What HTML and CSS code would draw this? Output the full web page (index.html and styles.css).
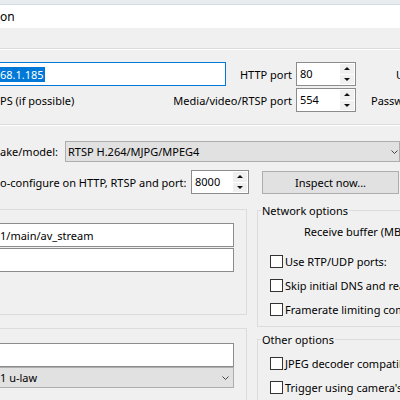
FILE: index.html
```html
<!DOCTYPE html>
<html lang="en">
<head>
  <meta charset="UTF-8" />
  <meta name="viewport" content="width=device-width, initial-scale=1.0"/>
  <title>Network IP camera configuration</title>
  <link rel="stylesheet" href="styles.css">
</head>
<body>
  <div class="frame-top"></div>
  <div class="titlebar">on</div>

  <div class="dialog">
    <div class="rule rule-top"></div>

    <div class="row row-a">
      <div class="textbox addr focused"><span class="sel">68.1.185</span></div>
      <div class="label port-label">HTTP port</div>
      <div class="spin">
        <span class="spin-val">80</span>
        <span class="spin-btns"><span class="spin-btn"><i class="up"></i></span><span class="spin-btn"><i class="down"></i></span></span>
      </div>
      <div class="side-label user">U</div>
    </div>

    <div class="row row-b">
      <div class="https">PS (if possible)</div>
      <div class="label port-label">Media/video/RTSP port</div>
      <div class="spin">
        <span class="spin-val">554</span>
        <span class="spin-btns"><span class="spin-btn"><i class="up"></i></span><span class="spin-btn"><i class="down"></i></span></span>
      </div>
      <div class="side-label pass">Passw</div>
    </div>

    <div class="rule rule-mid"></div>

    <div class="row row-c">
      <div class="mm-label">ake/model:</div>
      <div class="combo make">
        <span>RTSP H.264/MJPG/MPEG4</span>
        <svg class="chev" width="7" height="4" viewBox="0 0 7 4"><polyline points="0.5,0.5 3.5,3.5 6.5,0.5" fill="none" stroke="#444" stroke-width="1"/></svg>
      </div>
    </div>

    <div class="row row-d">
      <div class="auto-label">o-configure on HTTP, RTSP and port:</div>
      <div class="spin spin-small">
        <span class="spin-val">8000</span>
        <span class="spin-btns"><span class="spin-btn"><i class="up"></i></span><span class="spin-btn"><i class="down"></i></span></span>
      </div>
      <div class="button inspect">Inspect now...</div>
    </div>

    <div class="lower">
      <div class="left-col">
        <div class="group stream-main">
          <div class="field">1/main/av_stream</div>
          <div class="field"></div>
        </div>
        <div class="group stream-audio">
          <div class="field"></div>
          <div class="combo field-combo">
            <span>1 u-law</span>
            <svg class="chev" width="7" height="4" viewBox="0 0 7 4"><polyline points="0.5,0.5 3.5,3.5 6.5,0.5" fill="none" stroke="#444" stroke-width="1"/></svg>
          </div>
        </div>
      </div>

      <div class="right-col">
        <div class="group net">
          <div class="group-title">Network options</div>
          <div class="buf">Receive buffer (MB</div>
          <div class="opt first"><span class="box"></span>Use RTP/UDP ports:</div>
          <div class="opt"><span class="box"></span>Skip initial DNS and rea</div>
          <div class="opt"><span class="box"></span>Framerate limiting com</div>
        </div>
        <div class="group other">
          <div class="group-title">Other options</div>
          <div class="opt first"><span class="box"></span>JPEG decoder compatib</div>
          <div class="opt"><span class="box"></span>Trigger using camera's</div>
        </div>
      </div>
    </div>
  </div>
</body>
</html>
```

FILE: styles.css
```css
html, body {
  margin: 0;
}
body {
  width: 400px;
  height: 400px;
  overflow: hidden;
  background: #f0f0f0;
  color: #000;
  font-family: "Noto Sans", "Segoe UI", sans-serif;
  font-size: 11px;
}

/* window chrome */
.frame-top {
  height: 4px;
  background: #e9ecef;
  border-bottom: 1px solid #d3dce5;
}
.titlebar {
  height: 22px;
  padding-top: 1px;
  line-height: 22px;
  background: #fff;
  font-size: 12px;
}

.rule {
  height: 1px;
  background: #dcdcdc;
  border-bottom: 1px solid #fff;
}
.rule-top {
  margin-top: 20px;
}
.rule-mid {
  margin-top: 12px;
}

/* rows */
.row {
  display: flex;
  align-items: center;
  height: 24px;
  white-space: nowrap;
}
.row > * {
  flex-shrink: 0;
}
.row-a {
  margin-top: 12px;
}
.row-b {
  margin-top: 2px;
}
.row-c {
  margin-top: 15px;
  height: 21px;
}
.row-d {
  margin-top: 8px;
}

.label {
  display: flex;
  justify-content: flex-end;
}
.port-label {
  width: 66px;
  margin-right: 4px;
}
.side-label {
  flex-shrink: 1;
  min-width: 0;
}
.user {
  margin-left: 40px;
}
.pass {
  margin-left: 15px;
}

.textbox {
  box-sizing: border-box;
  height: 24px;
  background: #fff;
  border: 1px solid #8c8c8c;
  display: flex;
  align-items: center;
}
.addr {
  width: 226px;
  border-left: 0;
}
.focused {
  border-color: #0078d7;
}
.sel {
  background: #0078d7;
  color: #fff;
  line-height: 15px;
  padding-right: 1px;
}
.https {
  width: 226px;
}

/* spin box */
.spin {
  box-sizing: border-box;
  display: flex;
  width: 60px;
  height: 24px;
  background: #fff;
  border: 1px solid #8c8c8c;
}
.spin-small {
  width: 58px;
}
.spin-val {
  flex: 1;
  padding-left: 3px;
  line-height: 22px;
}
.spin-btns {
  width: 14px;
  display: flex;
  flex-direction: column;
  gap: 1px;
  padding: 1px 1px 1px 0;
}
.spin-btn {
  flex: 1;
  display: flex;
  align-items: center;
  justify-content: center;
  background: #f0f0f0;
}
.up {
  border-left: 3px solid transparent;
  border-right: 3px solid transparent;
  border-bottom: 3px solid #111;
}
.down {
  border-left: 3px solid transparent;
  border-right: 3px solid transparent;
  border-top: 3px solid #111;
}

/* combo boxes and buttons */
.combo {
  box-sizing: border-box;
  display: flex;
  align-items: center;
  height: 21px;
  background: #e1e1e1;
  border: 1px solid #adadad;
  padding-left: 2px;
  white-space: nowrap;
}
.chev {
  margin-left: auto;
  margin-right: 1px;
}
.mm-label {
  width: 65px;
}
.make {
  width: 335px;
}
.auto-label {
  width: 191px;
}
.button {
  box-sizing: border-box;
  width: 137px;
  height: 23px;
  margin-left: 13px;
  background: #e1e1e1;
  border: 1px solid #adadad;
  display: flex;
  align-items: center;
  justify-content: center;
}

/* group boxes */
.lower {
  display: flex;
  align-items: flex-start;
  margin-top: 15px;
  white-space: nowrap;
}
.left-col {
  width: 247px;
  flex-shrink: 0;
}
.right-col {
  width: 220px;
  flex-shrink: 0;
  margin-left: 10px;
}
.group {
  box-sizing: border-box;
  border: 1px solid #dcdcdc;
}
.left-col .group {
  border-left: 0;
}
.stream-main {
  height: 106px;
  padding-top: 13px;
}
.stream-audio {
  margin-top: 13px;
  height: 80px;
  padding-top: 14px;
}
.field {
  box-sizing: border-box;
  width: 234px;
  height: 24px;
  background: #fff;
  border: 1px solid #8c8c8c;
  border-left: 0;
  display: flex;
  align-items: center;
}
.field + .field {
  margin-top: 1px;
}
.field-combo {
  width: 234px;
  border-left: 0;
  padding-left: 0;
}
.field-combo .chev {
  margin-right: 4px;
}

.group-title {
  width: max-content;
  margin: -8px 0 0 3px;
  padding: 0 1px;
  line-height: 15px;
  background: #f0f0f0;
}
.net {
  margin-top: 1px;
  padding-bottom: 5px;
}
.other {
  margin-top: 12px;
  height: 80px;
}
.buf {
  height: 20px;
  line-height: 20px;
  margin-top: 4px;
  padding-left: 46px;
}
.opt {
  display: flex;
  align-items: center;
  height: 24px;
  padding-left: 12px;
}
.net .opt.first {
  margin-top: 7px;
}
.other .opt.first {
  margin-top: 4px;
}
.box {
  box-sizing: border-box;
  width: 13px;
  height: 13px;
  margin-right: 2px;
  background: #fff;
  border: 1px solid #333;
  flex-shrink: 0;
}
```
